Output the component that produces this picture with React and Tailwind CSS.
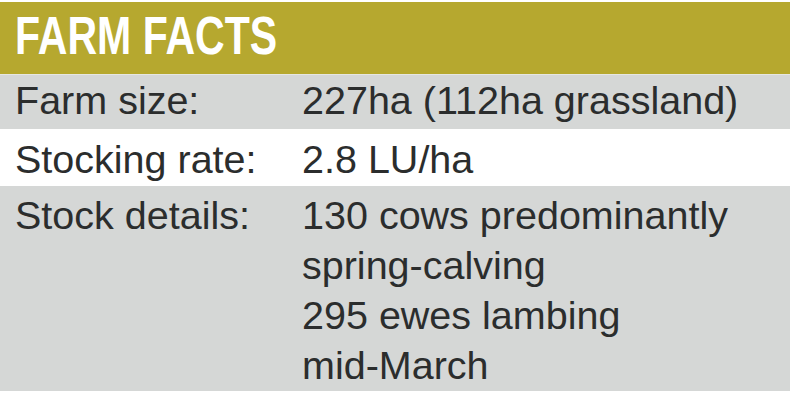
const rows = [
  { label: 'Farm size:', lines: ['227ha (112ha grassland)'], bg: 'bg-[#d5d7d6]', pad: 'h-[54px] pt-0' },
  { label: 'Stocking rate:', lines: ['2.8 LU/ha'], bg: 'bg-white', pad: 'h-[57px] pt-[5px]' },
  {
    label: 'Stock details:',
    lines: ['130 cows predominantly', 'spring-calving', '295 ewes lambing', 'mid-March'],
    bg: 'bg-[#d5d7d6]',
    pad: 'h-[205px] pt-[4px]',
  },
];

export default function App() {
  return (
    <div className="w-[790px] h-[404px] bg-white pt-[2px] overflow-hidden">
      <div className="h-[72px] bg-[#b6a82f] pl-[15px] flex items-start">
        <h1 className="inline-block origin-left scale-x-[0.76] whitespace-nowrap font-['Liberation_Sans',Arial,sans-serif] font-bold text-white text-[54px] leading-[67px]">
          FARM FACTS
        </h1>
      </div>
      <div className="h-[1px] bg-[#e6e7e2]" />
      {rows.map((r) => (
        <div
          key={r.label}
          className={`${r.bg} ${r.pad} flex font-['Liberation_Sans',Arial,sans-serif] text-[39.5px] leading-[50px] text-[#2b2d2d]`}
        >
          <div className="w-[302px] pl-[15px] shrink-0">{r.label}</div>
          <div>
            {r.lines.map((l) => (
              <div key={l}>{l}</div>
            ))}
          </div>
        </div>
      ))}
    </div>
  );
}
